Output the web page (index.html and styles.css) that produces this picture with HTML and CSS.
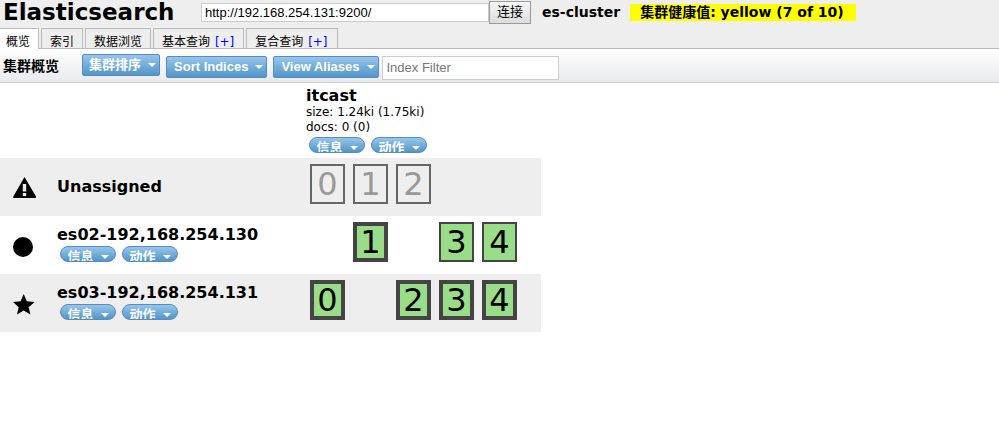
FILE: index.html
```html
<!DOCTYPE html>
<html lang="zh-CN">
<head>
<meta charset="utf-8">
<title>Elasticsearch</title>
<link rel="stylesheet" href="styles.css">
</head>
<body>
<header class="header">
  <div class="top">
    <h1 class="brand">Elasticsearch</h1>
    <form class="connect">
      <input class="url" type="text" aria-label="URL" value="http://192.168.254.131:9200/">
      <button class="connect-button" type="button">连接</button>
    </form>
    <span class="cluster-name">es-cluster</span>
    <span class="health">集群健康值: yellow (7 of 10)</span>
  </div>
  <nav class="tabs">
    <a class="tab active" href="#">概览</a>
    <a class="tab" href="#">索引</a>
    <a class="tab" href="#">数据浏览</a>
    <a class="tab" href="#">基本查询 <span class="plus">[+]</span></a>
    <a class="tab" href="#">复合查询 <span class="plus">[+]</span></a>
  </nav>
</header>
<section class="toolbar">
  <div class="overview-group">
    <h2 class="overview-title">集群概览</h2>
    <button class="menu" type="button">集群排序<span class="caret"></span></button>
  </div>
  <div class="index-group">
    <button class="menu" type="button">Sort Indices<span class="caret"></span></button>
    <button class="menu" type="button">View Aliases<span class="caret"></span></button>
    <input class="filter" type="text" placeholder="Index Filter" aria-label="Index Filter">
  </div>
</section>
<main>
  <table class="nodes">
    <thead>
      <tr>
        <td class="mark"></td>
        <td class="node"></td>
        <th class="index" scope="col">
          <div class="name">itcast</div>
          <div class="stat">size: 1.24ki (1.75ki)</div>
          <div class="stat">docs: 0 (0)</div>
          <div class="pills"><button class="pill" type="button">信息<span class="caret"></span></button><button class="pill" type="button">动作<span class="caret"></span></button></div>
        </th>
      </tr>
    </thead>
    <tbody>
      <tr>
        <td class="mark"><svg class="icon" viewBox="0 0 24 24" aria-hidden="true"><path fill-rule="evenodd" d="M11.5 1L23 20.5Q23.300 22 22 22H1Q-.3 22 .3 20.500ZM9.800 8V15.500H13.200V8ZM9.800 17V20H13.200V17Z"/></svg></td>
        <th class="node" scope="row"><div class="name">Unassigned</div></th>
        <td class="index"><div class="shards">
          <button class="shard unassigned" type="button">0</button>
          <button class="shard unassigned" type="button">1</button>
          <button class="shard unassigned" type="button">2</button>
          <span></span><span></span>
        </div></td>
      </tr>
      <tr>
        <td class="mark"><svg class="icon" viewBox="0 0 24 24" aria-hidden="true"><circle cx="10" cy="13" r="10"/></svg></td>
        <th class="node" scope="row"><div class="name">es02-192,168.254.130</div>
          <div class="pills"><button class="pill" type="button">信息<span class="caret"></span></button><button class="pill" type="button">动作<span class="caret"></span></button></div></th>
        <td class="index"><div class="shards">
          <span></span>
          <button class="shard primary" type="button">1</button>
          <span></span>
          <button class="shard" type="button">3</button>
          <button class="shard" type="button">4</button>
        </div></td>
      </tr>
      <tr>
        <td class="mark"><svg class="icon" viewBox="0 0 24 24" aria-hidden="true"><path d="M10.700 2L13.800 9.200L21.500 10L15.700 15.200L17.400 22.500L10.700 18.600L4 22.500L5.700 15.200L0 10L7.600 9.200Z"/></svg></td>
        <th class="node" scope="row"><div class="name">es03-192,168.254.131</div>
          <div class="pills"><button class="pill" type="button">信息<span class="caret"></span></button><button class="pill" type="button">动作<span class="caret"></span></button></div></th>
        <td class="index"><div class="shards">
          <button class="shard primary" type="button">0</button>
          <span></span>
          <button class="shard primary" type="button">2</button>
          <button class="shard primary" type="button">3</button>
          <button class="shard primary" type="button">4</button>
        </div></td>
      </tr>
    </tbody>
  </table>
</main>
</body>
</html>
```
FILE: styles.css
```css
* { box-sizing: border-box; }

body {
  margin: 0;
  background: #fff;
  color: #000;
  font: 12px/15px "DejaVu Sans", "Noto Sans CJK SC", sans-serif;
}

h1, h2 { margin: 0; }

button, input {
  margin: 0;
  font-family: "Liberation Sans", "Noto Sans CJK SC", sans-serif;
}

.header {
  background: #eee;
  border-bottom: 1px solid #bbb;
}

.top {
  display: flex;
  align-items: center;
  height: 24px;
  margin-bottom: 4px;
}

.brand {
  width: 201px;
  padding-left: 3px;
  font-size: 23px;
  line-height: 24px;
}

.connect {
  display: flex;
  align-items: center;
}

.url {
  width: 288px;
  height: 19px;
  padding: 1px 3px;
  border: 1px solid #ccc;
  background: #fff;
  font-size: 13px;
}

.connect-button {
  width: 42px;
  height: 23px;
  padding: 0;
  border: 1px solid #999;
  background: linear-gradient(#f6f6f6, #ddd);
  font-size: 13px;
  line-height: 20px;
}

.cluster-name, .health {
  font-size: 14px;
  font-weight: bold;
  line-height: 17px;
  white-space: nowrap;
}

.cluster-name { padding: 0 10px 0 11px; }

.health {
  padding: 0 12px 0 10px;
  background: #ff0;
}

.tabs {
  display: flex;
  gap: 2px;
}

.tab {
  height: 20px;
  padding: 4px 8px 0;
  border: 1px solid #bbb;
  border-bottom: 0;
  color: #000;
  line-height: 18px;
  text-decoration: none;
  white-space: nowrap;
}

.tab.active {
  height: 21px;
  margin-bottom: -1px;
  padding-left: 6px;
  border-left: 0;
  background: #fff;
}

.plus {
  padding: 0 1px;
  color: #00f;
}

.toolbar {
  display: flex;
  gap: 6px;
  height: 34px;
  border-bottom: 1px solid #ccd0d4;
  background: linear-gradient(#fff, #e8eaed);
}

.overview-group {
  display: flex;
  padding: 5px 0 0 3px;
}

.overview-title {
  width: 79px;
  font-size: 14px;
  line-height: 24px;
}

.index-group {
  display: flex;
  gap: 6px;
  padding-top: 7px;
}

.menu {
  display: flex;
  align-items: center;
  justify-content: center;
  gap: 7px;
  height: 22px;
  padding: 0 3px 0 6px;
  border: 1px solid #5a8ac6;
  border-radius: 2px;
  background: linear-gradient(#96c6eb, #5296c7);
  color: #fff;
  font-size: 13px;
  font-weight: bold;
  line-height: 20px;
  white-space: nowrap;
}

.index-group .menu { padding-left: 7px; }

.caret {
  border: 4px solid transparent;
  border-top-color: #fff;
  border-bottom: 0;
}

.filter {
  width: 177px;
  height: 24px;
  margin-left: -3px;
  padding: 0 4px 2px;
  border: 1px solid #ccc;
  background: #fff;
  font-size: 13px;
}

.filter::placeholder { color: #757575; }

.nodes { border-collapse: collapse; }

.nodes td, .nodes th {
  height: 58px;
  padding: 0;
  text-align: left;
  vertical-align: middle;
}

.nodes .mark {
  width: 57px;
  padding: 2px 0 0 13px;
}

.nodes .node { width: 249px; }

.nodes .index { width: 235px; }

.nodes thead .index {
  height: 75px;
  padding-top: 4px;
  vertical-align: top;
}

.nodes tbody tr:nth-child(odd) { background: #eee; }

.icon {
  display: block;
  width: 24px;
  height: 24px;
}

.name {
  font-size: 16px;
  font-weight: bold;
  line-height: 18px;
}

.stat { font-weight: normal; }

.pills {
  display: flex;
  gap: 6px;
  padding: 2px 3px;
}

.pill {
  display: flex;
  justify-content: center;
  align-items: flex-start;
  gap: 7px;
  width: 56px;
  height: 16px;
  padding: 0;
  overflow: hidden;
  border: 1px solid #5a8ac6;
  border-radius: 8px;
  background: linear-gradient(#96c6eb, #5296c7);
  color: #fff;
  font-size: 13px;
  font-weight: bold;
  line-height: 20px;
}

.pill .caret { margin-top: 8px; }

.shards {
  display: grid;
  grid-template-columns: repeat(5, 35px);
  gap: 8px;
  padding: 0 4px 6px;
}

.shard {
  height: 40px;
  padding: 0;
  border: 2px solid #444;
  background: #99dd88;
  color: #000;
  font-family: "DejaVu Sans", sans-serif;
  font-size: 32px;
  line-height: 36px;
}

.shard.primary {
  border-width: 4px;
  line-height: 32px;
}

.shard.unassigned {
  border-color: #666;
  background: #eee;
  color: #999;
}
```
